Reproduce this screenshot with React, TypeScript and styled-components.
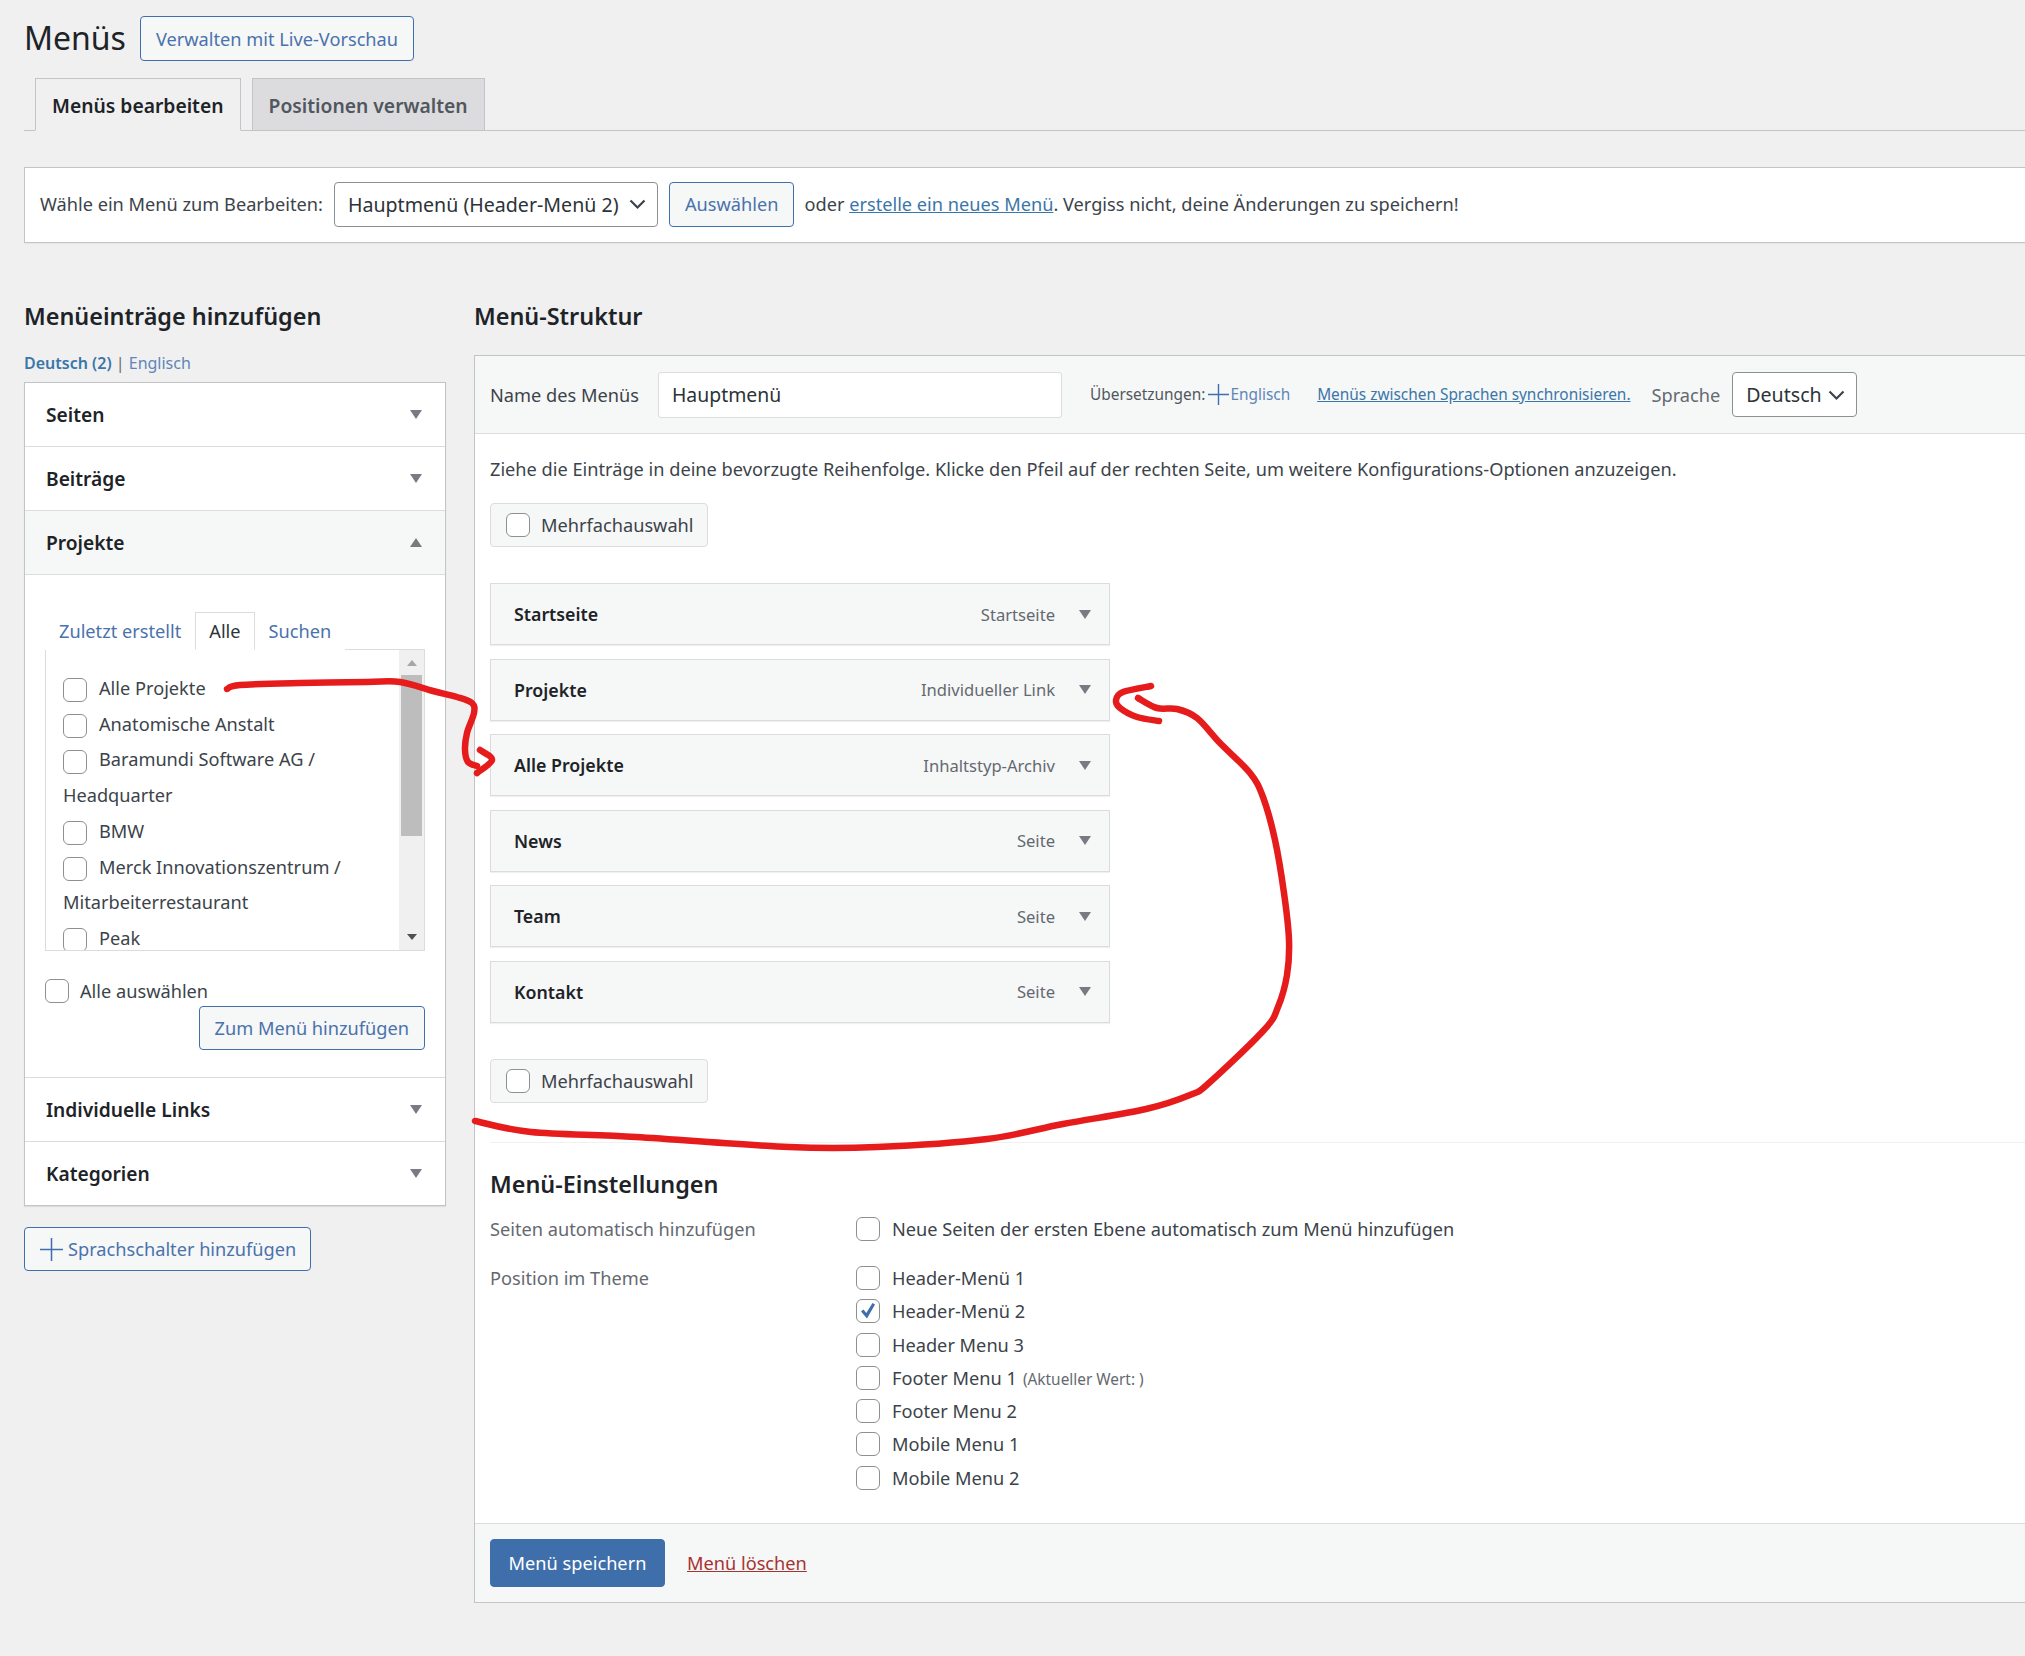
import React from 'react';
import styled, { createGlobalStyle } from 'styled-components';

const GlobalStyle = createGlobalStyle`
  html, body {
    margin: 0;
    padding: 0;
    background: #f0f0f1;
  }
  body {
    font-family: "Noto Sans", "Open Sans", sans-serif;
    font-size: 18.2px;
    color: #3c434a;
  }
  * {
    box-sizing: border-box;
  }
`;

const Page = styled.div`
  position: relative;
  width: 2025px;
  height: 1656px;
  padding: 16px 0 0 24px;
  overflow: hidden;
`;

const TitleRow = styled.div`
  display: flex;
  align-items: center;
  height: 45px;
`;

const Title = styled.h1`
  margin: 0 14px 0 0;
  width: 102px;
  padding-bottom: 2px;
  font-size: 32px;
  font-weight: 400;
  color: #1d2327;
`;

const OutlineButton = styled.button<{ $h?: number }>`
  height: ${(p) => p.$h || 45}px;
  display: inline-flex;
  align-items: center;
  padding: 0 15px;
  background: #f6f7f7;
  border: 1px solid #3f6fae;
  border-radius: 4px;
  color: #4a72ac;
  font: inherit;
  white-space: nowrap;
`;

const ManageButton = styled(OutlineButton)`
  margin-left: 11px;
`;

const TabBar = styled.div`
  display: flex;
  gap: 11px;
  height: 53px;
  margin-top: 17px;
  padding-left: 11px;
  border-bottom: 1px solid #c3c4c7;
`;

const Tab = styled.div<{ $active?: boolean }>`
  height: 53px;
  padding: 2px 16px 0;
  display: flex;
  align-items: center;
  border: 1px solid #c3c4c7;
  border-bottom-color: ${(p) => (p.$active ? '#f0f0f1' : '#c3c4c7')};
  background: ${(p) => (p.$active ? '#f0f0f1' : '#dcdcde')};
  color: ${(p) => (p.$active ? '#1d2327' : '#50575e')};
  font-size: 19.3px;
  font-weight: 600;
`;

const ManageBar = styled.div`
  display: flex;
  align-items: center;
  height: 76px;
  margin-top: 36px;
  padding: 0 0 2px 15px;
  background: #fff;
  border: 1px solid #c3c4c7;
  border-right: none;
  box-shadow: 0 1px 1px rgba(0, 0, 0, 0.04);
  white-space: nowrap;
`;

const ManageLabel = styled.span`
  margin-right: 11px;
`;

const FakeSelect = styled.div<{ $w: number }>`
  width: ${(p) => p.$w}px;
  height: 45px;
  flex: none;
  display: flex;
  align-items: center;
  justify-content: space-between;
  padding: 0 11px 0 13px;
  background: #fff;
  border: 1px solid #8c8f94;
  border-radius: 4px;
  color: #2c3338;
  font-size: 19.6px;
  white-space: nowrap;
`;

const ManageText = styled.span`
  margin-left: 10px;
`;

const TextLink = styled.a`
  color: #3a76a8;
  text-decoration: underline;
`;

const Columns = styled.div`
  display: flex;
  gap: 28px;
  margin-top: 57px;
`;

const LeftColumn = styled.div`
  width: 422px;
  flex: none;
`;

const RightColumn = styled.div`
  flex: 1;
  min-width: 0;
`;

const SectionHeading = styled.h2`
  margin: 0;
  height: 34px;
  line-height: 32px;
  font-size: 23.4px;
  font-weight: 600;
  color: #1d2327;
  white-space: nowrap;
`;

const LangLinks = styled.div`
  margin-top: 20px;
  height: 20px;
  line-height: 19px;
  font-size: 16px;
  color: #646970;
`;

const LangCurrent = styled.strong`
  color: #3a76a8;
  font-weight: 600;
`;

const LangOther = styled.span`
  color: #5f86b8;
`;

const Accordion = styled.div`
  margin-top: 8px;
  background: #fff;
  border: 1px solid #c3c4c7;
  box-shadow: 0 1px 1px rgba(0, 0, 0, 0.08);
`;

const AccordionRow = styled.div<{ $open?: boolean; $first?: boolean }>`
  height: ${(p) => (p.$first ? 63 : 64)}px;
  display: flex;
  align-items: center;
  justify-content: space-between;
  padding: 0 23px 0 21px;
  background: ${(p) => (p.$open ? '#f6f7f7' : '#fff')};
  border-top: ${(p) => (p.$first ? 'none' : '1px solid #dcdcde')};
  color: #1d2327;
  font-size: 19.2px;
  font-weight: 600;
`;

const Caret = styled.i<{ $up?: boolean }>`
  display: block;
  width: 0;
  height: 0;
  flex: none;
  border-left: 6px solid transparent;
  border-right: 6px solid transparent;
  border-top: ${(p) => (p.$up ? 'none' : '9px solid #787c82')};
  border-bottom: ${(p) => (p.$up ? '9px solid #787c82' : 'none')};
`;

const AccordionBody = styled.div`
  height: 503px;
  padding: 37px 20px 0;
  border-top: 1px solid #dcdcde;
`;

const PickerTabs = styled.div`
  display: flex;
  height: 38px;
  margin-bottom: -1px;
`;

const PickerTab = styled.div<{ $active?: boolean }>`
  height: 38px;
  padding: 0 13px;
  display: flex;
  align-items: center;
  color: ${(p) => (p.$active ? '#2c3338' : '#4a72ac')};
  background: #fff;
  border: 1px solid ${(p) => (p.$active ? '#dcdcde' : 'transparent')};
  border-bottom-color: ${(p) => (p.$active ? '#fff' : 'transparent')};
  position: relative;
  z-index: 1;
`;

const PickerBox = styled.div`
  display: flex;
  height: 302px;
  border: 1px solid #dcdcde;
`;

const PickerList = styled.div`
  flex: 1;
  min-width: 0;
  padding: 21px 12px 0 17px;
  overflow: hidden;
  line-height: 35.7px;
`;

const PickerItem = styled.div``;

const Scrollbar = styled.div`
  width: 25px;
  flex: none;
  display: flex;
  flex-direction: column;
  align-items: center;
  background: #f0f0f0;
  padding: 10px 0 10px;
`;

const ScrollArrow = styled.i<{ $up?: boolean }>`
  display: block;
  width: 0;
  height: 0;
  border-left: 5.5px solid transparent;
  border-right: 5.5px solid transparent;
  border-top: ${(p) => (p.$up ? 'none' : '6px solid #505050')};
  border-bottom: ${(p) => (p.$up ? '6px solid #a6a6a6' : 'none')};
`;

const ScrollThumb = styled.div`
  width: 21px;
  height: 161px;
  margin-top: 9px;
  margin-bottom: auto;
  background: #bdbdbd;
`;

const Check = styled.span<{ $inline?: boolean }>`
  display: ${(p) => (p.$inline ? 'inline-flex' : 'flex')};
  flex: none;
  align-items: center;
  justify-content: center;
  width: 24px;
  height: 24px;
  margin-right: ${(p) => (p.$inline ? 12 : 0)}px;
  vertical-align: middle;
  background: #fff;
  border: 1px solid #8c8f94;
  border-radius: 6px;
`;

const SelectAll = styled.div`
  display: flex;
  align-items: center;
  gap: 11px;
  height: 24px;
  margin-top: 28px;
`;

const AddRow = styled.div`
  display: flex;
  justify-content: flex-end;
  margin-top: 3px;
`;

const SwitcherRow = styled.div`
  margin-top: 21px;
`;

const SwitcherButton = styled(OutlineButton)`
  padding: 0 0 0 12px;
  gap: 4px;
  width: 287px;
`;

const MenuPanel = styled.div`
  margin-top: 21px;
  background: #fff;
  border: 1px solid #c3c4c7;
  border-right: none;
`;

const PanelHeader = styled.div`
  display: flex;
  align-items: center;
  height: 78px;
  padding-left: 15px;
  background: #f6f7f7;
  border-bottom: 1px solid #dcdcde;
  white-space: nowrap;
`;

const NameLabel = styled.span`
  width: 168px;
  flex: none;
`;

const NameInput = styled.div`
  width: 404px;
  height: 46px;
  flex: none;
  display: flex;
  align-items: center;
  padding: 0 13px;
  background: #fff;
  border: 1px solid #dcdcde;
  border-radius: 3px;
  font-size: 19.4px;
  color: #2c3338;
`;

const Translations = styled.span`
  margin-left: 28px;
  display: flex;
  align-items: center;
  font-size: 15.4px;
  color: #50575e;
`;

const PlusSvg = styled.svg`
  margin: 0 1px 0 3px;
`;

const AddLang = styled.span`
  color: #5f86b8;
`;

const SyncLink = styled(TextLink)`
  margin-left: 27px;
  font-size: 15.4px;
`;

const LangLabel = styled.span`
  margin: 0 12px 0 21px;
  color: #646970;
`;

const PanelBody = styled.div`
  padding: 23px 0 33px 15px;
`;

const Instructions = styled.div`
  height: 26px;
  line-height: 24px;
  white-space: nowrap;
`;

const BulkBox = styled.div`
  display: flex;
  align-items: center;
  gap: 11px;
  width: 218px;
  height: 44px;
  padding-left: 15px;
  background: #f6f7f7;
  border: 1px solid #dcdcde;
  border-radius: 4px;
`;

const TopBulk = styled(BulkBox)`
  margin-top: 20px;
`;

const BottomBulk = styled(BulkBox)`
  margin-top: 36px;
`;

const MenuItems = styled.div`
  display: flex;
  flex-direction: column;
  gap: 13.6px;
  width: 620px;
  margin-top: 36px;
`;

const MenuItem = styled.div`
  height: 62px;
  display: flex;
  align-items: center;
  padding: 0 18px 0 23px;
  background: #f6f7f7;
  border: 1px solid #dcdcde;
  box-shadow: 0 1px 1px rgba(0, 0, 0, 0.06);
`;

const ItemTitle = styled.span`
  flex: 1;
  font-size: 17.8px;
  font-weight: 600;
  color: #1d2327;
`;

const ItemType = styled.span`
  margin-right: 24px;
  font-size: 16.6px;
  color: #646970;
`;

const Separator = styled.div`
  height: 1px;
  margin-top: 39px;
  background: #f0f0f1;
`;

const SettingsHeading = styled.h3`
  margin: 26px 0 0;
  height: 30px;
  line-height: 30px;
  font-size: 23.4px;
  font-weight: 600;
  color: #1d2327;
`;

const SettingRow = styled.div<{ $gap: number }>`
  display: flex;
  margin-top: ${(p) => p.$gap}px;
`;

const SettingLabel = styled.div`
  width: 366px;
  height: 24px;
  line-height: 24px;
  color: #646970;
`;

const OptionList = styled.div`
  display: flex;
  flex-direction: column;
  gap: 9.3px;
`;

const Option = styled.div`
  display: flex;
  align-items: center;
  gap: 12px;
  height: 24px;
`;

const CurrentNote = styled.small`
  margin-left: 6px;
  font-size: 15.4px;
  color: #646970;
`;

const PanelFooter = styled.div`
  display: flex;
  align-items: center;
  height: 79px;
  padding-left: 15px;
  background: #f6f7f7;
  border-top: 1px solid #dcdcde;
`;

const SaveButton = styled.button`
  width: 175px;
  height: 48px;
  background: #3f6fab;
  border: 1px solid #3f6fab;
  border-radius: 4px;
  color: #fff;
  font: inherit;
`;

const DeleteLink = styled.a`
  margin-left: 22px;
  color: #a83232;
  text-decoration: underline;
`;

const Annotation = styled.svg`
  position: absolute;
  left: 0;
  top: 0;
  pointer-events: none;
`;

type Pt = [number, number];

// catmull-rom through the hand-drawn points
const smooth = (pts: Pt[]) => {
  let d = `M${pts[0][0]} ${pts[0][1]}`;
  for (let i = 0; i < pts.length - 1; i++) {
    const p0 = pts[i - 1] || pts[i];
    const p1 = pts[i];
    const p2 = pts[i + 1];
    const p3 = pts[i + 2] || p2;
    const c1x = p1[0] + (p2[0] - p0[0]) / 6;
    const c1y = p1[1] + (p2[1] - p0[1]) / 6;
    const c2x = p2[0] - (p3[0] - p1[0]) / 6;
    const c2y = p2[1] - (p3[1] - p1[1]) / 6;
    d += ` C${c1x} ${c1y} ${c2x} ${c2y} ${p2[0]} ${p2[1]}`;
  }
  return d;
};

const strokes: Pt[][] = [
  [[227, 689], [240, 685], [300, 683], [367, 682], [400, 682], [433, 691], [457, 697], [472, 703], [474, 713], [467, 733], [465, 750], [468, 762], [477, 766]],
  [[480, 750], [492, 760], [477, 773]],
  [[475, 1121], [531, 1132], [636, 1137], [789, 1147], [877, 1147], [987, 1139], [1063, 1124], [1146, 1109], [1190, 1095], [1209, 1083], [1264, 1030], [1278, 1007], [1287, 975], [1289, 940], [1284, 893], [1275, 840], [1263, 797], [1250, 773], [1220, 743], [1197, 718], [1177, 709], [1157, 708], [1138, 698]],
  [[1151, 686], [1123, 692], [1116, 700], [1120, 708], [1137, 717], [1159, 721]],
];

const Chevron = () => (
  <svg width="17" height="12" viewBox="0 0 17 12" fill="none">
    <path d="M1.5 2.5 L8.5 9.5 L15.5 2.5" stroke="#3c434a" strokeWidth="2.2" />
  </svg>
);

const Tick = () => (
  <svg width="18" height="18" viewBox="0 0 18 18">
    <path d="M2 9.5 L4.5 7.5 L7.3 11 L13.5 1 L16 2.5 L8 16.5 Z" fill="#3f6fab" />
  </svg>
);

const Plus = ({ size, color }: { size: number; color: string }) => (
  <PlusSvg width={size} height={size} viewBox="0 0 24 24">
    <path d="M12 0 V24 M0 12 H24" stroke={color} strokeWidth="1.6" />
  </PlusSvg>
);

const menuItems = [
  ['Startseite', 'Startseite'],
  ['Projekte', 'Individueller Link'],
  ['Alle Projekte', 'Inhaltstyp-Archiv'],
  ['News', 'Seite'],
  ['Team', 'Seite'],
  ['Kontakt', 'Seite'],
];

const projects = [
  'Alle Projekte',
  'Anatomische Anstalt',
  'Baramundi Software AG / Headquarter',
  'BMW',
  'Merck Innovationszentrum / Mitarbeiterrestaurant',
  'Peak',
];

const positions = [
  'Header-Menü 1',
  'Header-Menü 2',
  'Header Menu 3',
  'Footer Menu 1',
  'Footer Menu 2',
  'Mobile Menu 1',
  'Mobile Menu 2',
];

export default function App() {
  return (
    <Page>
      <GlobalStyle />
      <TitleRow>
        <Title>Menüs</Title>
        <OutlineButton>Verwalten mit Live-Vorschau</OutlineButton>
      </TitleRow>

      <TabBar>
        <Tab $active>Menüs bearbeiten</Tab>
        <Tab>Positionen verwalten</Tab>
      </TabBar>

      <ManageBar>
        <ManageLabel>Wähle ein Menü zum Bearbeiten:</ManageLabel>
        <FakeSelect $w={324}>
          Hauptmenü (Header-Menü 2)
          <Chevron />
        </FakeSelect>
        <ManageButton>Auswählen</ManageButton>
        <ManageText>
          oder <TextLink>erstelle ein neues Menü</TextLink>. Vergiss nicht, deine Änderungen zu speichern!
        </ManageText>
      </ManageBar>

      <Columns>
        <LeftColumn>
          <SectionHeading>Menüeinträge hinzufügen</SectionHeading>
          <LangLinks>
            <LangCurrent>Deutsch (2)</LangCurrent> | <LangOther>Englisch</LangOther>
          </LangLinks>
          <Accordion>
            <AccordionRow $first>
              Seiten
              <Caret />
            </AccordionRow>
            <AccordionRow>
              Beiträge
              <Caret />
            </AccordionRow>
            <AccordionRow $open>
              Projekte
              <Caret $up />
            </AccordionRow>
            <AccordionBody>
              <PickerTabs>
                <PickerTab>Zuletzt erstellt</PickerTab>
                <PickerTab $active>Alle</PickerTab>
                <PickerTab>Suchen</PickerTab>
              </PickerTabs>
              <PickerBox>
                <PickerList>
                  {projects.map((name) => (
                    <PickerItem key={name}>
                      <Check $inline />
                      {name}
                    </PickerItem>
                  ))}
                </PickerList>
                <Scrollbar>
                  <ScrollArrow $up />
                  <ScrollThumb />
                  <ScrollArrow />
                </Scrollbar>
              </PickerBox>
              <SelectAll>
                <Check />
                Alle auswählen
              </SelectAll>
              <AddRow>
                <OutlineButton $h={44}>Zum Menü hinzufügen</OutlineButton>
              </AddRow>
            </AccordionBody>
            <AccordionRow>
              Individuelle Links
              <Caret />
            </AccordionRow>
            <AccordionRow>
              Kategorien
              <Caret />
            </AccordionRow>
          </Accordion>
          <SwitcherRow>
            <SwitcherButton $h={44}>
              <Plus size={23} color="#3f6fae" />
              Sprachschalter hinzufügen
            </SwitcherButton>
          </SwitcherRow>
        </LeftColumn>

        <RightColumn>
          <SectionHeading>Menü-Struktur</SectionHeading>
          <MenuPanel>
            <PanelHeader>
              <NameLabel>Name des Menüs</NameLabel>
              <NameInput>Hauptmenü</NameInput>
              <Translations>
                Übersetzungen:
                <Plus size={21} color="#3f6fae" />
                <AddLang>Englisch</AddLang>
              </Translations>
              <SyncLink>Menüs zwischen Sprachen synchronisieren.</SyncLink>
              <LangLabel>Sprache</LangLabel>
              <FakeSelect $w={125}>
                Deutsch
                <Chevron />
              </FakeSelect>
            </PanelHeader>

            <PanelBody>
              <Instructions>
                Ziehe die Einträge in deine bevorzugte Reihenfolge. Klicke den Pfeil auf der rechten Seite, um weitere
                Konfigurations-Optionen anzuzeigen.
              </Instructions>
              <TopBulk>
                <Check />
                Mehrfachauswahl
              </TopBulk>
              <MenuItems>
                {menuItems.map(([title, type]) => (
                  <MenuItem key={title}>
                    <ItemTitle>{title}</ItemTitle>
                    <ItemType>{type}</ItemType>
                    <Caret />
                  </MenuItem>
                ))}
              </MenuItems>
              <BottomBulk>
                <Check />
                Mehrfachauswahl
              </BottomBulk>
              <Separator />
              <SettingsHeading>Menü-Einstellungen</SettingsHeading>
              <SettingRow $gap={18}>
                <SettingLabel>Seiten automatisch hinzufügen</SettingLabel>
                <Option>
                  <Check />
                  Neue Seiten der ersten Ebene automatisch zum Menü hinzufügen
                </Option>
              </SettingRow>
              <SettingRow $gap={25}>
                <SettingLabel>Position im Theme</SettingLabel>
                <OptionList>
                  {positions.map((name) => (
                    <Option key={name}>
                      <Check>{name === 'Header-Menü 2' && <Tick />}</Check>
                      <span>
                        {name}
                        {name === 'Footer Menu 1' && <CurrentNote>(Aktueller Wert: )</CurrentNote>}
                      </span>
                    </Option>
                  ))}
                </OptionList>
              </SettingRow>
            </PanelBody>

            <PanelFooter>
              <SaveButton>Menü speichern</SaveButton>
              <DeleteLink>Menü löschen</DeleteLink>
            </PanelFooter>
          </MenuPanel>
        </RightColumn>
      </Columns>

      <Annotation width="2025" height="1656" viewBox="0 0 2025 1656" fill="none">
        {strokes.map((pts, i) => (
          <path key={i} d={smooth(pts)} stroke="#e61c1c" strokeWidth="6.5" strokeLinecap="round" strokeLinejoin="round" />
        ))}
      </Annotation>
    </Page>
  );
}
